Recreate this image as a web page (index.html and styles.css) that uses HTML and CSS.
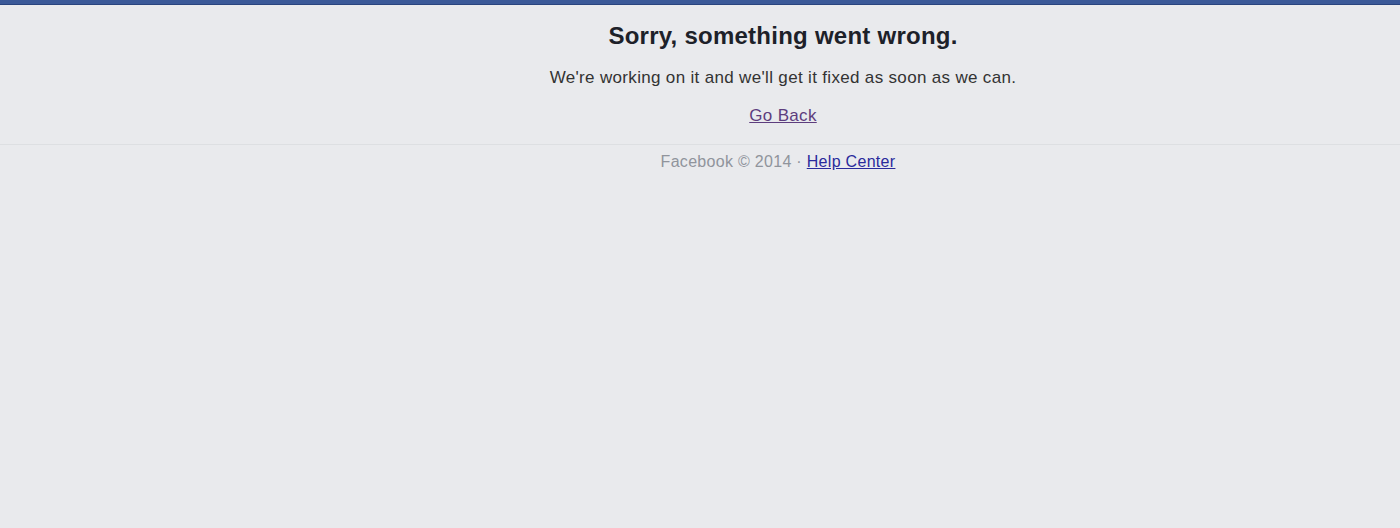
FILE: index.html
```html
<!DOCTYPE html>
<html lang="en">
<head>
    <meta charset="UTF-8">
    <title>Facebook</title>
    <link rel="stylesheet" href="styles.css">
</head>
<body>
    <div class="topbar"></div>

    <div class="error-box">
        <h1>Sorry, something went wrong.</h1>
        <p>We're working on it and we'll get it fixed as soon as we can.</p>
        <p class="back"><a href="#">Go Back</a></p>
    </div>

    <div class="footer">
        <span class="copy">Facebook &copy; 2014 &middot;</span> <a href="#">Help Center</a>
    </div>
</body>
</html>
```

FILE: styles.css
```css
body {
    margin: 0;
    background-color: #e9eaed;
    font-family: "Liberation Sans", Arial, sans-serif;
    color: #333;
}
.topbar {
    height: 4px;
    background-color: #3b5998;
    border-bottom: 1px solid #29447e;
}
.error-box {
    padding: 17px 0 2px 166px;
    text-align: center;
    border-bottom: 1px solid #dddfe2;
}
h1 {
    margin: 0 0 18px;
    font-size: 24px;
    letter-spacing: 0.25px;
    color: #1d2129;
}
.error-box p {
    margin: 0 0 18px;
    font-size: 17px;
    letter-spacing: 0.33px;
}
.error-box .back {
    margin-bottom: 16px;
}
.back a {
    color: #5d3d7e;
}
.footer {
    padding: 8px 0 0 156px;
    text-align: center;
    font-size: 16px;
    letter-spacing: 0.3px;
}
.copy {
    color: #90949c;
}
.footer a {
    color: #2a2a9c;
}
```
